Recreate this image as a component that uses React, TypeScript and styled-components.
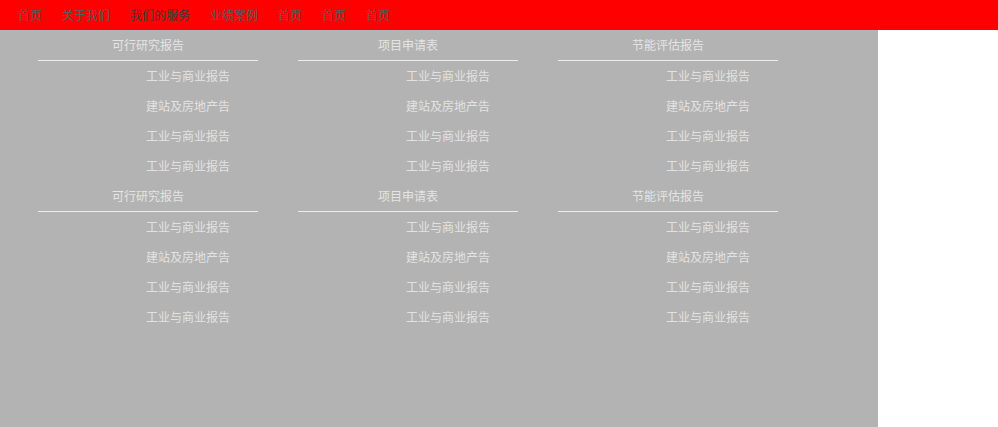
import styled, { createGlobalStyle } from 'styled-components'

const GlobalStyle = createGlobalStyle`
  html, body {
    margin: 0;
    padding: 0;
    background: #fff;
    font-family: "Noto Sans CJK SC", "Noto Sans", "Liberation Sans", sans-serif;
    font-size: 12px;
  }
  ul {
    margin: 0;
    padding: 0;
    list-style: none;
  }
`

const NavBar = styled.nav`
  background: #ff0000;
  height: 30px;
  display: flex;
  align-items: center;
  padding-left: 8px;
`

const NavItem = styled.a<{ $active?: boolean }>`
  padding: 0 10px;
  line-height: 30px;
  font-size: 12px;
  font-family: "Noto Sans CJK SC", sans-serif;
  color: ${(p) => (p.$active ? '#3a3a3a' : '#5a5a5a')};
  text-decoration: none;
  cursor: pointer;
`

const Dropdown = styled.div`
  width: 878px;
  height: 397px;
  background: #b3b3b3;
  display: flex;
  flex-direction: column;
`

const Group = styled.div`
  display: flex;
  gap: 40px;
  padding-left: 38px;
`

const Column = styled.div`
  width: 220px;
`

const ColumnTitle = styled.div`
  height: 30px;
  line-height: 30px;
  text-align: center;
  color: #e4e4e4;
  border-bottom: 1px solid #ececec;
`

const Item = styled.li`
  height: 30px;
  line-height: 30px;
  padding-left: 108px;
  color: #e2e2e2;
  white-space: nowrap;
`

const navLinks = ['首页', '关于我们', '我们的服务', '业绩案例', '首页', '首页', '首页']
const titles = ['可行研究报告', '项目申请表', '节能评估报告']
const items = ['工业与商业报告', '建站及房地产告', '工业与商业报告', '工业与商业报告']

export default function App() {
  return (
    <>
      <GlobalStyle />
      <NavBar>
        {navLinks.map((label, i) => (
          <NavItem key={i} $active={i === 2}>
            {label}
          </NavItem>
        ))}
      </NavBar>
      <Dropdown>
        {[0, 1].map((g) => (
          <Group key={g}>
            {titles.map((title) => (
              <Column key={title}>
                <ColumnTitle>{title}</ColumnTitle>
                <ul>
                  {items.map((item, i) => (
                    <Item key={i}>{item}</Item>
                  ))}
                </ul>
              </Column>
            ))}
          </Group>
        ))}
      </Dropdown>
    </>
  )
}
